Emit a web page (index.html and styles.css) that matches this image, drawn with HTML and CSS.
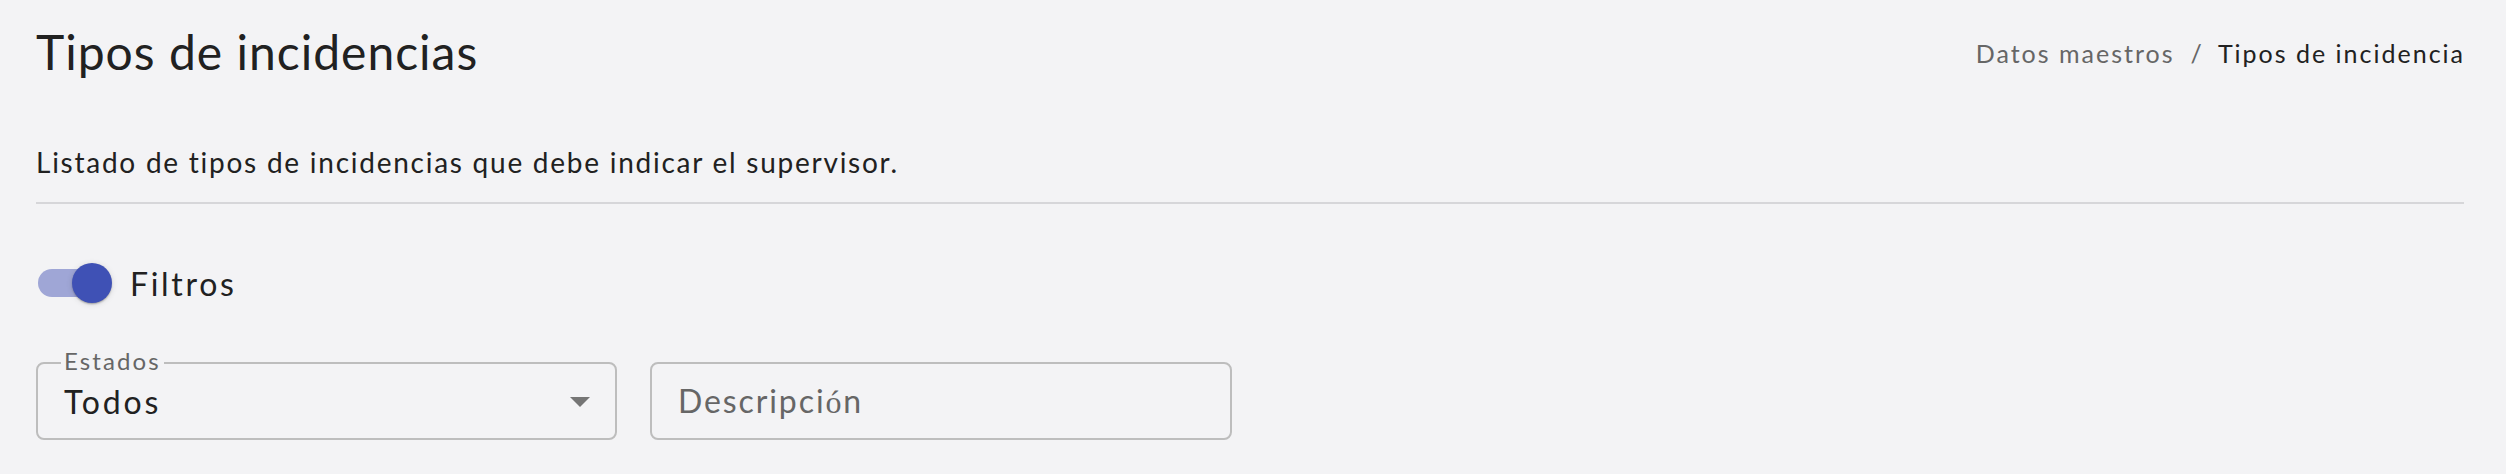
FILE: index.html
```html
<!DOCTYPE html>
<html lang="es">
<head>
<meta charset="utf-8">
<title>Tipos de incidencias</title>
<link rel="stylesheet" href="styles.css">
</head>
<body>
<main class="page">
  <header class="header">
    <h1 class="title">Tipos de incidencias</h1>
    <nav class="breadcrumb">
      <span class="crumb">Datos maestros</span>
      <span class="sep">/</span>
      <span class="crumb current">Tipos de incidencia</span>
    </nav>
  </header>
  <p class="intro">Listado de tipos de incidencias que debe indicar el supervisor.</p>
  <div class="toggle-row">
    <span class="switch"><span class="track"></span><span class="thumb"></span></span>
    <span class="toggle-label">Filtros</span>
  </div>
  <div class="filters">
    <div class="field select">
      <span class="field-label">Estados</span>
      <span class="value">Todos</span>
      <svg class="arrow" viewBox="0 0 24 24" width="48" height="48"><path d="M7 10l5 5 5-5z" fill="#757575"/></svg>
    </div>
    <div class="field">
      <span class="placeholder">Descripci<span class="fallback">ó</span>n</span>
    </div>
  </div>
</main>
</body>
</html>
```

FILE: styles.css
```css
html, body {
  margin: 0;
  padding: 0;
  background: #f3f3f5;
}
body {
  font-family: Lato, "Noto Sans", sans-serif;
  color: #212121;
}
.page {
  padding: 24px 42px 0 36px;
}
.header {
  display: flex;
  justify-content: space-between;
  align-items: flex-start;
}
.title {
  margin: 0;
  font-size: 48px;
  line-height: 56px;
  font-weight: 400;
  letter-spacing: 1px;
}
.breadcrumb {
  margin-top: 14px;
  display: flex;
  font-size: 25px;
  line-height: 30px;
  letter-spacing: 2px;
  color: #666;
}
.sep {
  margin: 0 14px 0 16px;
}
.current {
  color: #212121;
  margin-right: -1px;
}
.intro {
  margin: 65px 0 0;
  font-size: 28px;
  line-height: 34px;
  letter-spacing: 1.75px;
  padding-bottom: 23px;
  border-bottom: 2px solid #d6d6d9;
}
.toggle-row {
  margin-top: 59px;
  display: flex;
  align-items: center;
  height: 40px;
}
.switch {
  position: relative;
  width: 74px;
  height: 40px;
  margin-left: 2px;
}
.track {
  position: absolute;
  left: 0;
  top: 6px;
  width: 68px;
  height: 28px;
  border-radius: 14px;
  background: #9fa6d6;
}
.thumb {
  position: absolute;
  left: 34px;
  top: 0;
  width: 40px;
  height: 40px;
  border-radius: 50%;
  background: #3f51b5;
  box-shadow: 0 2px 2px -1px rgba(0,0,0,.2), 0 1px 2px rgba(0,0,0,.14), 0 1px 6px rgba(0,0,0,.12);
}
.toggle-label {
  margin-left: 18px;
  font-size: 32px;
  letter-spacing: 2.7px;
}
.filters {
  margin-top: 59px;
  display: flex;
  gap: 33px;
}
.field {
  position: relative;
  box-sizing: border-box;
  width: 582px;
  height: 78px;
  border: 2px solid #bdbdbd;
  border-radius: 8px;
  display: flex;
  align-items: center;
  padding: 0 11px 0 26px;
  font-size: 32px;
}
.select {
  width: 581px;
}
.field-label {
  position: absolute;
  top: -15px;
  left: 23px;
  padding: 0 3px;
  background: #f3f3f5;
  font-size: 24px;
  line-height: 24px;
  letter-spacing: 2.1px;
  color: #666;
}
.value {
  letter-spacing: 2.8px;
}
.arrow {
  margin-left: auto;
}
.placeholder {
  color: #666;
  letter-spacing: 1.9px;
}
.fallback {
  font-family: "Liberation Serif", serif;
  letter-spacing: 0;
  margin-right: 1.9px;
}
```
